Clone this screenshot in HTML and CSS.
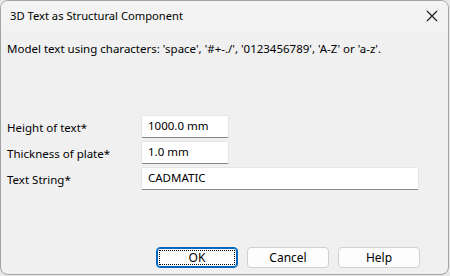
FILE: index.html
```html
<!DOCTYPE html>
<html>
<head>
<meta charset="utf-8">
<link rel="stylesheet" href="styles.css">
</head>
<body>
<div class="window">
  <div class="titlebar">
    <span class="title">3D Text as Structural Component</span>
    <svg class="close" width="12" height="12" viewBox="0 0 12 12"><path d="M1 1 L11 11 M11 1 L1 11" stroke="#1a1a1a" stroke-width="1.1" fill="none"/></svg>
  </div>
  <div class="client">
    <p class="intro">Model text using characters: 'space', '#+-./', '0123456789', 'A-Z' or 'a-z'.</p>
    <div class="form">
      <label class="label">Height of text*</label>
      <div class="input short">1000.0 mm</div>
      <label class="label">Thickness of plate*</label>
      <div class="input short">1.0 mm</div>
      <label class="label">Text String*</label>
      <div class="input long">CADMATIC</div>
    </div>
    <div class="buttons">
      <button class="btn default"><span class="focus">OK</span></button>
      <button class="btn">Cancel</button>
      <button class="btn">Help</button>
    </div>
  </div>
</div>
</body>
</html>
```
FILE: styles.css
```css
html, body {
  margin: 0;
  padding: 0;
  background: #e8e8e8;
}
body {
  width: 450px;
  height: 276px;
  font-family: "Noto Sans", "Open Sans", sans-serif;
  font-size: 11.5px;
  color: #000;
}
.window {
  box-sizing: border-box;
  width: 449px;
  height: 275px;
  border: 1px solid #a3a3a3;
  border-radius: 8px;
  overflow: hidden;
  display: flex;
  flex-direction: column;
  background: #f0f0f0;
}
.titlebar {
  height: 30px;
  flex: none;
  background: #f3f3f3;
  display: flex;
  align-items: center;
  justify-content: space-between;
  padding: 0 10px 0 9px;
}
.title {
  font-size: 11.2px;
  line-height: 16px;
  color: #000;
}
.close {
  display: block;
}
.client {
  flex: 1;
  display: flex;
  flex-direction: column;
  padding: 10px 28px 6px 6px;
}
.intro {
  margin: 0;
  line-height: 16px;
}
.form {
  margin-top: 58px;
  display: grid;
  grid-template-columns: 134px auto;
  row-gap: 3px;
  align-items: center;
}
.label {
  line-height: 16px;
  padding-top: 2px;
}
.input {
  box-sizing: border-box;
  height: 23px;
  background: #fff;
  border: 1px solid #e6e6e6;
  border-bottom: 1px solid #868686;
  border-radius: 2px;
  padding: 2px 6px 0;
  line-height: 16px;
}
.short { width: 88px; }
.long { width: 278px; }
.buttons {
  margin-top: auto;
  display: flex;
  justify-content: flex-end;
  gap: 9px;
}
.btn {
  box-sizing: border-box;
  width: 82px;
  height: 21px;
  font: inherit;
  font-size: 12px;
  color: #000;
  background: #fdfdfd;
  border: 1px solid #d0d0d0;
  border-radius: 4px;
  padding: 0;
  display: flex;
  align-items: center;
  justify-content: center;
  line-height: 16px;
}
.btn.default {
  border: 1px solid #0067c0;
  box-shadow: inset 0 0 0 1px #0067c0;
  padding: 2px;
}
.focus {
  flex: 1;
  align-self: stretch;
  display: flex;
  align-items: center;
  justify-content: center;
  border: 1px dotted #000;
}
```
